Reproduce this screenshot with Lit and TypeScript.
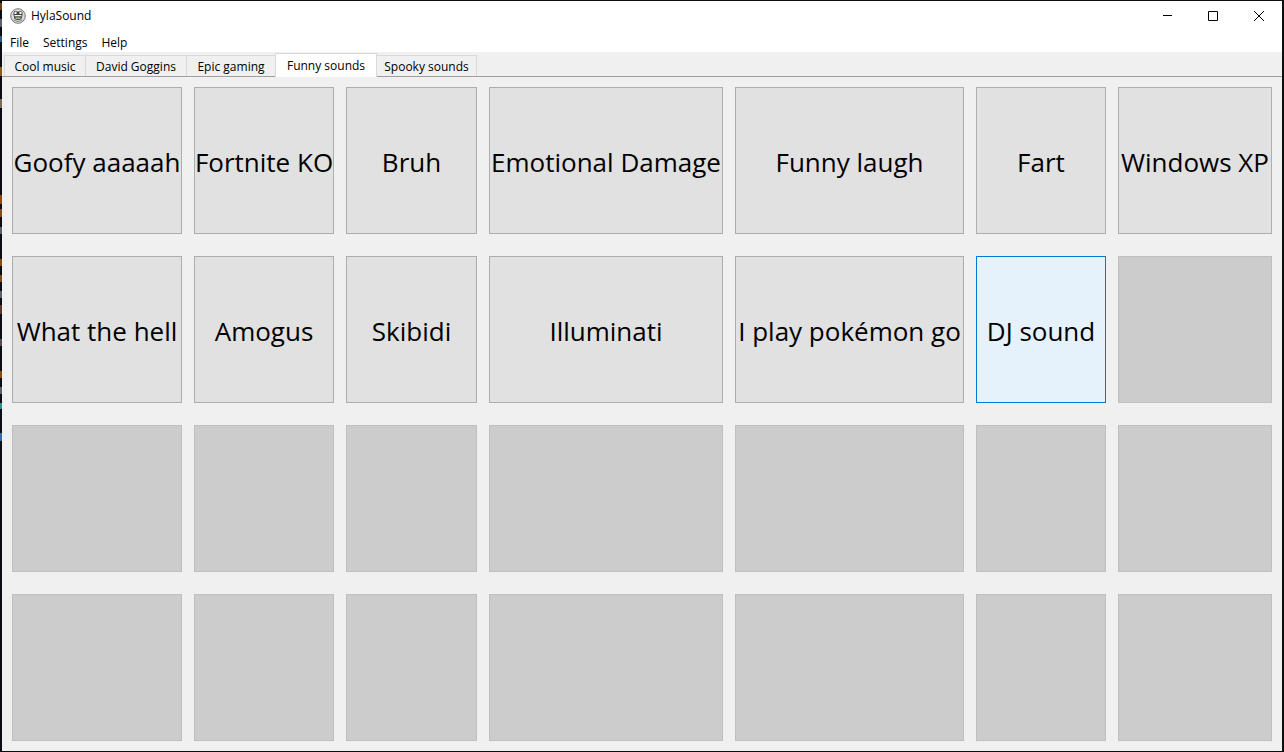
import { LitElement, html, css } from "lit";
import { customElement, state } from "lit/decorators.js";
import { classMap } from "lit/directives/class-map.js";
import { styleMap } from "lit/directives/style-map.js";

const MENUS = ["File", "Settings", "Help"];
const TABS = [
  { label: "Cool music", width: 82 },
  { label: "David Goggins", width: 102 },
  { label: "Epic gaming", width: 90 },
  { label: "Funny sounds", width: 102 },
  { label: "Spooky sounds", width: 101 },
];
const SOUNDS = [
  "Goofy aaaaah", "Fortnite KO", "Bruh", "Emotional Damage", "Funny laugh", "Fart", "Windows XP",
  "What the hell", "Amogus", "Skibidi", "Illuminati", "I play pokémon go", "DJ sound",
];
const PADS = 28;
// Vertical positions and colours of the editor text peeking out beside the window.
const SLIVERS: [number, number, string][] = [
  [3, 7, "#6b3f12"], [19, 8, "#5c5f70"], [36, 6, "#2b5a7d"], [67, 9, "#8a5a1c"], [99, 9, "#7d6a58"],
  [195, 9, "#8a4a10"], [209, 8, "#8a4a10"], [227, 7, "#5c5f70"], [259, 7, "#8a4a10"],
  [275, 7, "#7a4a20"], [291, 7, "#5c5f70"], [305, 9, "#5a3a28"], [339, 7, "#5a4a50"],
  [371, 7, "#8a4a10"], [387, 7, "#5c5f70"], [403, 6, "#2f8a8a"], [433, 8, "#2f6fb0"],
];

@customElement("app-root")
export class AppRoot extends LitElement {
  static styles = css`
    :host { display: block; }
    * { box-sizing: border-box; }
    .desktop {
      position: relative;
      min-height: 100vh;
      display: flex;
      padding: 1px 2px;
      background: #0b0d12;
      font-family: "Segoe UI", "Open Sans", "Noto Sans", sans-serif;
      font-size: 12px;
      line-height: 16px;
      color: #000;
    }
    .sliver { position: absolute; left: 0; width: 2px; }
    .window { flex: 1; min-width: 0; display: flex; flex-direction: column; background: #f0f0f0; }
    button { font: inherit; color: inherit; border: 0; margin: 0; padding: 0; background: none; white-space: nowrap; }
    .title { display: flex; align-items: center; height: 30px; background: #fff; padding-left: 8px; }
    .name { flex: 1; margin: 0 0 0 5px; font-size: 12px; font-weight: 400; }
    .control { width: 46px; height: 30px; display: grid; place-items: center; }
    .menu { display: flex; height: 21px; padding-left: 1px; background: #fff; }
    .menu button { padding: 2px 7px 0; }
    .tabs { display: flex; align-items: flex-end; height: 25px; padding: 0 2px; border-bottom: 1px solid #a0a0a0; }
    .tab { height: 21px; margin-right: -1px; padding-top: 1px; border: 1px solid #d9d9d9; border-bottom: 0; }
    .tab.active { height: 24px; margin-bottom: -1px; padding: 0; background: #fff; position: relative; }
    .pads {
      flex: 1;
      display: grid;
      grid-template-columns: 170fr 140fr 131fr 234fr 229fr 130fr 154fr;
      grid-template-rows: repeat(4, 1fr);
      gap: 22px 12px;
      padding: 10px;
    }
    .pad { min-width: 0; min-height: 0; display: flex; align-items: center; justify-content: center; padding-top: 2px; background: #e1e1e1; border: 1px solid #adadad; font-size: 26px; line-height: 36px; }
    .pad:disabled { background: #ccc; border-color: #bfbfbf; }
    .pad.hot { background: #e5f1fb; border-color: #0078d7; }
  `;

  @state() private tab = 3;

  render() {
    return html`
      <div class="desktop">
        ${SLIVERS.map(([top, height, background]) => html`<i class="sliver" style=${styleMap({ top: `${top}px`, height: `${height}px`, background })}></i>`)}
        <main class="window">
          <header class="title">
            <svg width="16" height="16" viewBox="0 0 16 16" aria-hidden="true">
              <circle cx="8" cy="8" r="7.3" fill="#dcdcdc" stroke="#777" />
              <path d="M3.5 7Q3 3 5.5 3Q8 4 10.5 3Q13 3 12.5 7L11.5 11Q8 13 4.5 11Z" fill="#3f473f" />
              <circle cx="5.5" cy="4.9" r="1.2" fill="#fff" /><circle cx="10.5" cy="4.9" r="1.2" fill="#fff" />
              <path d="M4.5 7H11.5V8.3H4.5Z" fill="#eef2e8" />
              <path d="M5.5 9.3H10.5V11H5.5Z" fill="#9fb38c" />
              <path d="M3.5 12Q8 15 12.5 12" stroke="#888" fill="none" />
            </svg>
            <h1 class="name">HylaSound</h1>
            <button class="control" aria-label="Minimize"><svg width="10" height="10"><path d="M1 4.5H10" stroke="#000" /></svg></button>
            <button class="control" aria-label="Maximize"><svg width="10" height="10"><path d="M.5 .5H9.5V9.5H.5Z" fill="none" stroke="#000" /></svg></button>
            <button class="control" aria-label="Close"><svg width="10" height="10"><path d="M0 0L10 10M10 0L0 10" stroke="#000" /></svg></button>
          </header>
          <nav class="menu">${MENUS.map((m) => html`<button>${m}</button>`)}</nav>
          <div class="tabs" role="tablist">
            ${TABS.map((t, i) => html`<button role="tab" aria-selected=${i === this.tab} class=${classMap({ tab: true, active: i === this.tab })} style=${styleMap({ width: `${t.width}px` })} @click=${() => (this.tab = i)}>${t.label}</button>`)}
          </div>
          <section class="pads">
            ${Array.from({ length: PADS }, (_, i) => html`<button class=${classMap({ pad: true, hot: i === 12 })} ?disabled=${i >= SOUNDS.length}>${SOUNDS[i] ?? ""}</button>`)}
          </section>
        </main>
      </div>
    `;
  }
}
